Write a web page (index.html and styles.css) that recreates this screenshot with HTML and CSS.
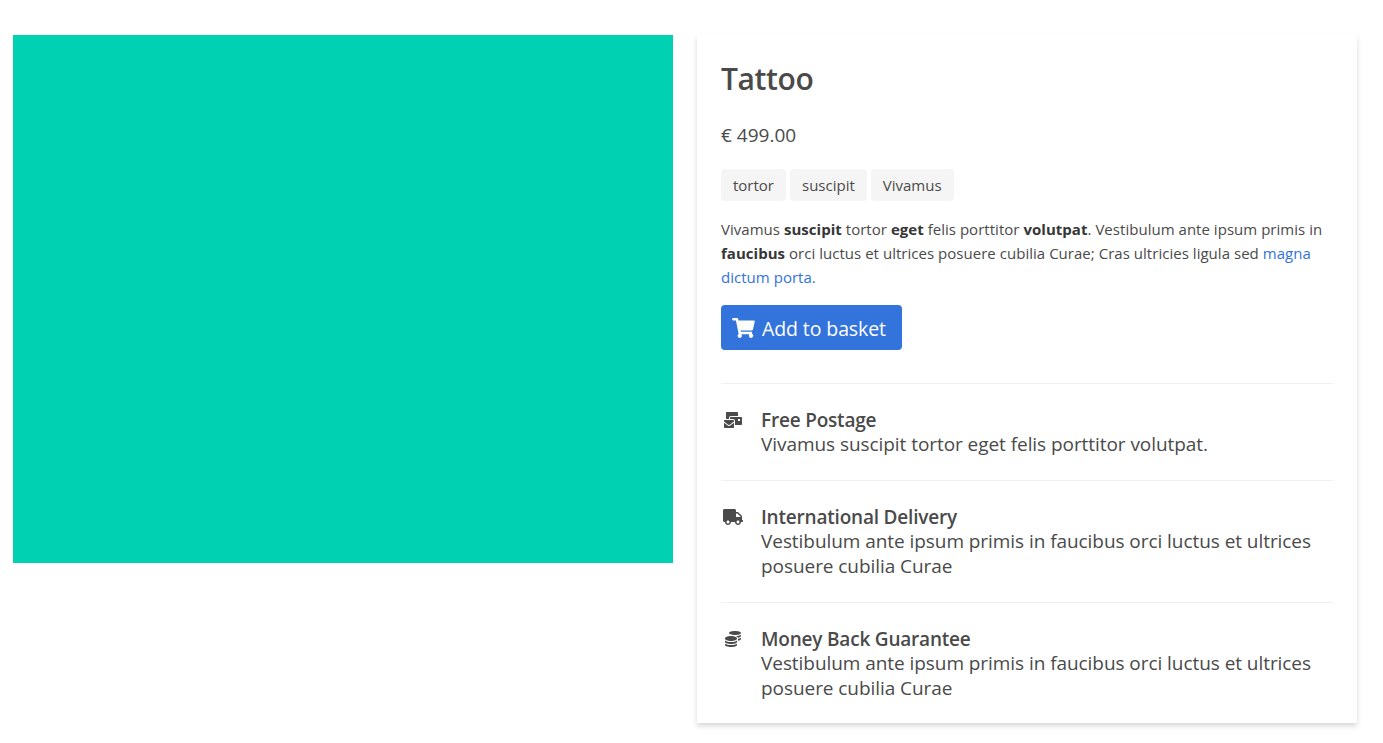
FILE: index.html
```html
<!DOCTYPE html>
<html>
<head>
  <title>Tattoo</title>
  <link rel="stylesheet" href="styles.css">
</head>
<body>
  <div class="product">
    <div class="product-image"></div>

    <div class="product-card">
      <h1 class="product-title">Tattoo</h1>
      <p class="product-price">€ 499.00</p>
      <div class="tags">
        <span class="tag">tortor</span>
        <span class="tag">suscipit</span>
        <span class="tag">Vivamus</span>
      </div>
      <p class="product-text">Vivamus <strong>suscipit</strong> tortor <strong>eget</strong> felis porttitor <strong>volutpat</strong>. Vestibulum ante ipsum primis in <strong>faucibus</strong> orci luctus et ultrices posuere cubilia Curae; Cras ultricies ligula sed <a href="#">magna dictum porta.</a></p>
      <button class="basket-btn">
        <svg class="basket-icon" viewBox="0 0 576 512"><path fill="currentColor" d="M528.12 301.319l47.273-208C578.806 78.301 567.391 64 551.99 64H159.208l-9.166-44.81C147.758 8.021 137.93 0 126.529 0H24C10.745 0 0 10.745 0 24v16c0 13.255 10.745 24 24 24h69.883l70.248 343.435C147.325 417.1 136 435.222 136 456c0 30.928 25.072 56 56 56s56-25.072 56-56c0-15.674-6.447-29.835-16.824-40h209.647C430.447 426.165 424 440.326 424 456c0 30.928 25.072 56 56 56s56-25.072 56-56c0-22.172-12.888-41.332-31.579-50.405l5.517-24.276c3.413-15.018-8.002-29.319-23.403-29.319H218.117l-6.545-32h293.145c11.206 0 20.92-7.754 23.403-18.681z"/></svg>
        <span>Add to basket</span>
      </button>

      <div class="feature feature-first">
        <svg class="feature-icon" viewBox="0 0 576 512"><path fill="currentColor" d="M160 448c-25.6 0-51.2-22.4-64-32-64-44.8-83.2-60.8-96-70.4V480c0 17.67 14.33 32 32 32h256c17.67 0 32-14.33 32-32V345.6c-12.8 9.6-32 25.6-96 70.4-12.8 9.6-38.4 32-64 32zm128-192H32c-17.67 0-32 14.33-32 32v16c25.6 19.2 22.4 19.2 115.2 86.4 9.6 6.4 28.8 25.6 44.8 25.6s35.2-19.2 44.8-22.4c92.8-67.2 89.6-67.2 115.2-86.4V288c0-17.67-14.33-32-32-32zm256-96H224c-17.67 0-32 14.33-32 32v32h96c33.21 0 60.59 25.42 63.71 57.82l.29-.22V416h192c17.67 0 32-14.33 32-32V192c0-17.67-14.33-32-32-32zm-32 128h-64v-64h64v64zm-352-96c0-35.29 28.71-64 64-64h224V32c0-17.67-14.33-32-32-32H96C78.33 0 64 14.33 64 32v192h96v-32z"/></svg>
        <div class="feature-body">
          <strong>Free Postage</strong>
          <p>Vivamus suscipit tortor eget felis porttitor volutpat.</p>
        </div>
      </div>

      <div class="feature">
        <svg class="feature-icon" viewBox="0 0 640 512"><path fill="currentColor" d="M624 352h-16V243.9c0-12.7-5.1-24.9-14.1-33.9L494 110.1c-9-9-21.2-14.1-33.9-14.1H416V48c0-26.5-21.5-48-48-48H48C21.5 0 0 21.5 0 48v320c0 26.5 21.5 48 48 48h16c0 53 43 96 96 96s96-43 96-96h128c0 53 43 96 96 96s96-43 96-96h48c8.8 0 16-7.2 16-16v-32c0-8.8-7.2-16-16-16zM160 464c-26.5 0-48-21.5-48-48s21.5-48 48-48 48 21.5 48 48-21.5 48-48 48zm320 0c-26.5 0-48-21.5-48-48s21.5-48 48-48 48 21.5 48 48-21.5 48-48 48zm80-208H416V144h44.1l99.9 99.9V256z"/></svg>
        <div class="feature-body">
          <strong>International Delivery</strong>
          <p>Vestibulum ante ipsum primis in faucibus orci luctus et ultrices posuere cubilia Curae</p>
        </div>
      </div>

      <div class="feature">
        <svg class="feature-icon" viewBox="0 0 512 512"><path fill="currentColor" d="M0 405.3V448c0 35.3 86 64 192 64s192-28.7 192-64v-42.7C342.7 434.4 267.2 448 192 448S41.3 434.4 0 405.3zM320 128c106 0 192-28.7 192-64S426 0 320 0 128 28.7 128 64s86 64 192 64zM0 300.4V352c0 35.3 86 64 192 64s192-28.7 192-64v-51.6c-41.3 34-116.9 51.6-192 51.6S41.3 334.4 0 300.4zm416 11c57.3-11.1 96-31.7 96-55.4v-42.7c-23.2 16.4-57.3 27.6-96 34.5v63.6zM192 160C86 160 0 195.8 0 240s86 80 192 80 192-35.8 192-80-86-80-192-80zm219.3 56.3c60-10.8 100.7-32 100.7-56.3v-42.7c-35.5 25.1-96.5 38.6-160.7 41.8 29.5 14.3 51.2 33.5 60 57.2z"/></svg>
        <div class="feature-body">
          <strong>Money Back Guarantee</strong>
          <p>Vestibulum ante ipsum primis in faucibus orci luctus et ultrices posuere cubilia Curae</p>
        </div>
      </div>
    </div>
  </div>
</body>
</html>
```

FILE: styles.css
```css
body {
  margin: 0;
  background-color: #ffffff;
  color: #4a4a4a;
  font-family: "Open Sans", "Noto Sans", sans-serif;
  font-size: 16px;
}

.product {
  display: flex;
  align-items: flex-start;
  gap: 24px;
  padding: 35px 26px 20px 13px;
}

.product-image {
  flex: 0 0 660px;
  height: 528px;
  background-color: #00d1b2;
}

.product-card {
  flex: 0 0 660px;
  box-sizing: border-box;
  height: 688px;
  padding: 24px;
  background-color: #ffffff;
  box-shadow: 0 3px 5px rgba(10, 10, 10, 0.16);
}

.product-title {
  margin: 0;
  font-size: 30px;
  font-weight: 600;
  line-height: 40px;
  letter-spacing: -0.4px;
  color: #4a4a4a;
}

.product-price {
  margin: 23px 0 0;
  font-size: 19px;
  line-height: 27px;
}

.tags {
  display: flex;
  gap: 4px;
  margin-top: 20px;
}

.tag {
  height: 32px;
  padding: 0 12px;
  border-radius: 4px;
  background-color: #f5f5f5;
  font-size: 15px;
  line-height: 32px;
}

.product-text {
  margin: 16px 0 0;
  font-size: 15px;
  line-height: 24px;
  letter-spacing: 0.03px;
}

.product-text strong {
  font-weight: 700;
  color: #363636;
}

.product-text a {
  color: #3273dc;
  text-decoration: none;
}

.basket-btn {
  display: flex;
  align-items: center;
  gap: 7px;
  height: 45px;
  margin-top: 16px;
  padding: 1px 16px 0 11px;
  border: none;
  border-radius: 4px;
  background-color: #3273dc;
  color: #ffffff;
  font-family: inherit;
  font-size: 19.5px;
  letter-spacing: -0.1px;
}

.basket-icon {
  width: 23px;
  height: 20px;
}

.feature {
  display: flex;
  gap: 16px;
  padding: 24px 0 23px;
  border-top: 1px solid #f0f0f0;
}

.feature-first {
  margin-top: 33px;
}

.feature-icon {
  flex: 0 0 24px;
  width: 24px;
  height: 16px;
  margin-top: 4px;
}

.feature-body {
  font-size: 19px;
  line-height: 25px;
  letter-spacing: -0.06px;
}

.feature-body strong {
  display: block;
  font-weight: 600;
  line-height: 24px;
  letter-spacing: -0.2px;
}

.feature-body p {
  margin: 0;
}
```
